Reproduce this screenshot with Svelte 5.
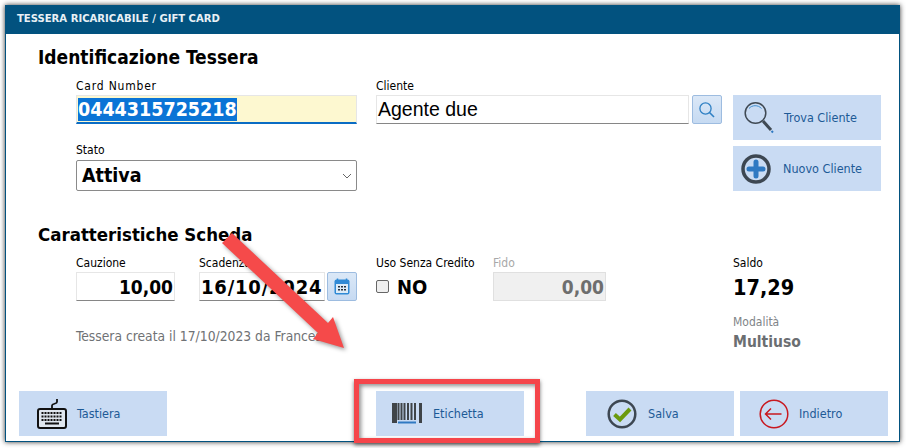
<script lang="ts">
	let saldo = '17,29';
</script>

<div class="page">
	<div class="window">
		<div class="titlebar">TESSERA RICARICABILE / GIFT CARD</div>

		<div class="content">
			<h2 class="first">Identificazione Tessera</h2>
			<div class="row top">
				<div class="col-left">
					<div class="field">
						<span class="lbl wide">Card Number</span>
						<div class="input card"><span class="selected">0444315725218</span></div>
					</div>
					<div class="field stato">
						<span class="lbl">Stato</span>
						<div class="select">
							<span>Attiva</span>
							<svg width="10" height="6" viewBox="0 0 10 6"><path d="M1 1l4 4 4-4" fill="none" stroke="#666" stroke-width="1" /></svg>
						</div>
					</div>
				</div>

				<div class="field col-cliente">
					<span class="lbl">Cliente</span>
					<div class="with-btn">
						<div class="input cliente">Agente due</div>
						<button class="mini" aria-label="Cerca">
							<svg width="18" height="18" viewBox="0 0 18 18" fill="none" stroke="#2f80c4" stroke-width="1.3">
								<circle cx="7.5" cy="7.5" r="5.6" />
								<path d="M11.5 11.5l4.5 4.5" stroke-width="1.6" />
							</svg>
						</button>
					</div>
				</div>

				<div class="col-actions">
					<button class="btn trova">
						<svg width="32" height="34" viewBox="0 0 32 34" fill="none">
							<circle cx="12.5" cy="12" r="10.3" stroke="#3f4953" stroke-width="1.5" />
							<path d="M6 7.5c3-3.6 9-3.9 12.500 0" stroke="#3f8fd0" stroke-width="1" />
							<path d="M20 20l8 9" stroke="#3f4953" stroke-width="3" />
							<path d="M28.500 30l1.500 1.500" stroke="#2f79c2" stroke-width="2" />
						</svg>
						Trova Cliente
					</button>
					<button class="btn nuovo">
						<svg width="30" height="30" viewBox="0 0 30 30" fill="none">
							<circle cx="15" cy="15" r="13" stroke="#3d4752" stroke-width="3.500" />
							<path d="M15 8v14M8 15h14" stroke="#2f79c2" stroke-width="5" stroke-linecap="round" />
						</svg>
						Nuovo Cliente
					</button>
				</div>
			</div>

			<h2 class="second">Caratteristiche Scheda</h2>
			<div class="row mid">
				<div class="field w-cauzione">
					<span class="lbl">Cauzione</span>
					<div class="input num">10,00</div>
				</div>
				<div class="field w-scadenza">
					<span class="lbl">Scadenza</span>
					<div class="with-btn">
						<div class="input date">16/10/2024</div>
						<button class="mini" aria-label="Calendario">
							<svg width="16" height="17" viewBox="0 0 16 17">
								<rect x="0.500" y="1.500" width="15" height="15" rx="2" fill="#2f8ad6" />
								<rect x="2" y="6" width="12" height="9" fill="#dcebf8" />
								<path d="M3.500 0.500v3M12.500 0.500v3" stroke="#2f8ad6" stroke-width="1.500" />
								<path d="M4 8h2v1.500H4zM7 8h2v1.500H7zM10 8h2v1.500h-2zM4 11h2v1.500H4zM7 11h2v1.500H7zM10 11h2v1.500h-2z" fill="#26323d" />
							</svg>
						</button>
					</div>
				</div>
				<div class="field w-uso">
					<span class="lbl">Uso Senza Credito</span>
					<div class="check-line">
						<input type="checkbox" />
						<span>NO</span>
					</div>
				</div>
				<div class="field w-fido">
					<span class="lbl muted">Fido</span>
					<div class="input num disabled">0,00</div>
				</div>
				<div class="field w-saldo">
					<span class="lbl">Saldo</span>
					<div class="saldo">{saldo}</div>
				</div>
			</div>

			<div class="row info">
				<div class="created">Tessera creata il 17/10/2023 da Francesco</div>
				<div class="modalita">
					<span class="lbl muted2">Modalità</span>
					<div class="multi">Multiuso</div>
				</div>
			</div>
		</div>

		<div class="footer">
			<button class="btn tastiera">
				<svg width="30" height="31" viewBox="0 0 30 31" fill="none">
					<path d="M15 11V7.500c0-2 5-1.500 5-3.500V1" stroke="#111" stroke-width="1.800" />
					<rect x="1" y="11" width="28" height="19" rx="2" stroke="#111" stroke-width="2" fill="#dfe6ee" />
					<path d="M4.500 15h21M4.500 18.500h21" stroke="#111" stroke-width="2" stroke-dasharray="2 1" />
					<path d="M4.500 22h21" stroke="#111" stroke-width="2" stroke-dasharray="2 1" />
					<path d="M8 25.500h14" stroke="#111" stroke-width="2" />
				</svg>
				Tastiera
			</button>
			<button class="btn etichetta">
				<svg width="32" height="21" viewBox="0 0 32 21" fill="none">
					<path d="M7.500 0v17M10.500 0v17M13.500 0v17M17 0v17M20.500 0v17M24 0v17" stroke="#3f4448" stroke-width="2" />
					<path d="M1 0h5v20H1z" fill="#3f4448" />
					<path d="M28 0h3v20h-3z" fill="#3f4448" />
					<path d="M7 19.500h18" stroke="#2f79c2" stroke-width="2" />
				</svg>
				Etichetta
			</button>
			<div class="spacer"></div>
			<button class="btn salva">
				<svg width="30" height="30" viewBox="0 0 30 30" fill="none">
					<circle cx="15" cy="15" r="13.300" stroke="#3d4752" stroke-width="2.500" />
					<path d="M7.500 15.500l5.500 5L23 10" stroke="#6b9a0e" stroke-width="4" />
				</svg>
				Salva
			</button>
			<button class="btn indietro">
				<svg width="30" height="30" viewBox="0 0 30 30" fill="none">
					<circle cx="15" cy="15" r="13.800" stroke="#c8181f" stroke-width="1.500" />
					<path d="M6.500 15h16M12 9.500L6.500 15l5.500 5.500" stroke="#c8181f" stroke-width="1.500" />
				</svg>
				Indietro
			</button>
		</div>
	</div>

	<div class="mark-box"></div>
	<svg class="arrow" width="906" height="448" viewBox="0 0 906 448">
		<polygon points="222,243 232,233 328,323 333,317 344,348 313,339 318,333" fill="#f54a4a" />
	</svg>
</div>

<style>
	:global(body) {
		margin: 0;
		background: #fff;
	}

	.page {
		position: relative;
		width: 906px;
		height: 448px;
		overflow: hidden;
		padding: 5px 6px 0 5px;
		box-sizing: border-box;
		font-family: "DejaVu Sans", "Noto Sans", sans-serif;
		font-stretch: condensed;
		color: #000;
	}

	.window {
		height: 437px;
		display: flex;
		flex-direction: column;
		background: #fff;
		border: 1px solid #02527f;
		border-top: 0;
		box-sizing: border-box;
		box-shadow: 0 0 5px rgba(0, 0, 0, 0.8);
	}

	.titlebar {
		height: 29px;
		flex-shrink: 0;
		display: flex;
		align-items: center;
		padding: 0 0 2px 11px;
		box-sizing: border-box;
		background: #02527f;
		color: #e8f0f5;
		font-size: 11.200px;
		font-weight: 700;
	}

	.content {
		flex: 1;
		padding-left: 32px;
	}

	h2 {
		margin: 0;
		font-size: 18.500px;
		font-weight: 700;
		line-height: 22px;
	}

	h2.first {
		margin-top: 12px;
		font-size: 19px;
	}

	h2.second {
		margin-top: 33px;
	}

	.row {
		display: flex;
		padding-left: 38px;
	}

	.row.top {
		margin-top: 11px;
	}

	.row.mid {
		margin-top: 10px;
	}

	.field {
		display: flex;
		flex-direction: column;
	}

	.lbl {
		font-size: 12px;
		line-height: 14px;
		margin-bottom: 2px;
	}

	.lbl.wide {
		letter-spacing: 0.8px;
	}

	.lbl.muted {
		color: #a8a8a8;
	}

	.lbl.muted2 {
		color: #808488;
	}

	.col-left {
		width: 281px;
		margin-right: 19px;
	}

	.stato {
		margin-top: 19px;
	}

	.stato .lbl {
		margin-bottom: 3px;
	}

	.input {
		height: 29px;
		box-sizing: border-box;
		display: flex;
		align-items: center;
		background: #fff;
		border: 1px solid #e6e6e6;
		border-bottom: 1px solid #868686;
		padding: 0 2px;
	}

	.card {
		background: #fdf8d0;
		border-bottom: 2px solid #0a6cc4;
		font-size: 19.500px;
		font-weight: 700;
		padding-left: 1px;
	}

	.selected {
		background: #0a74d6;
		color: #fff;
		line-height: 23px;
	}

	.select {
		height: 31px;
		box-sizing: border-box;
		display: flex;
		align-items: center;
		justify-content: space-between;
		border: 1px solid #8a8a8a;
		border-radius: 2px;
		padding: 0 4px 0 5px;
		font-size: 19.500px;
		font-weight: 700;
	}

	.col-cliente {
		width: 346px;
		margin-right: 11px;
	}

	.with-btn {
		display: flex;
		gap: 3px;
	}

	.cliente {
		flex: 1;
		padding-left: 1px;
		font-family: "Liberation Sans", Arial, sans-serif;
		font-stretch: normal;
		font-size: 19.500px;
	}

	.mini {
		width: 30px;
		height: 29px;
		flex-shrink: 0;
		padding: 0;
		display: flex;
		align-items: center;
		justify-content: center;
		border: 1px solid #9dbce0;
		border-radius: 2px;
		background: linear-gradient(#dbe8f7, #c6daf2);
	}

	.col-actions {
		width: 148px;
		margin-top: 16px;
		display: flex;
		flex-direction: column;
		gap: 6px;
	}

	.btn {
		width: 148px;
		height: 45px;
		flex-shrink: 0;
		display: flex;
		align-items: center;
		padding: 0;
		border: 0;
		background: #c9dbf3;
		color: #1d5a96;
		font-family: inherit;
		font-stretch: inherit;
		font-size: 12.500px;
	}

	.trova { padding-left: 10px; gap: 9px; }
	.nuovo { padding-left: 8px; gap: 12px; }
	.tastiera { padding-left: 18px; gap: 10px; }
	.etichetta { padding-left: 15px; gap: 10px; }
	.salva { padding-left: 21px; gap: 11px; }
	.indietro { padding-left: 19px; gap: 10px; }

	.w-cauzione { width: 99px; margin-right: 24px; }
	.w-scadenza { width: 158px; margin-right: 19px; }
	.w-uso { width: 117px; }
	.w-fido { width: 113px; margin-right: 127px; }

	.w-scadenza .with-btn {
		gap: 2px;
	}

	.num {
		justify-content: flex-end;
		padding-right: 1px;
		font-size: 19px;
		font-weight: 700;
	}

	.date {
		flex: 1;
		padding-left: 1px;
		font-size: 20px;
		font-weight: 700;
		letter-spacing: 0.8px;
	}

	.disabled {
		background: #f0f0f0;
		border: 1px solid #e0e0e0;
		color: #6e6e6e;
	}

	.check-line {
		height: 29px;
		display: flex;
		align-items: center;
		gap: 8px;
		font-size: 20px;
		font-weight: 700;
	}

	.check-line input {
		appearance: none;
		width: 13px;
		height: 13px;
		margin: 0;
		background: #efefef;
		border: 1px solid #666;
		border-radius: 2px;
	}

	.saldo {
		height: 30px;
		display: flex;
		align-items: center;
		font-size: 21.500px;
		font-weight: 700;
	}

	.info {
		justify-content: space-between;
		padding-right: 0;
	}

	.created {
		margin-top: 26px;
		font-size: 13.750px;
		line-height: 17px;
		color: #6f7275;
	}

	.modalita {
		width: 148px;
		margin-right: 18px;
		margin-top: 9px;
	}

	.multi {
		margin-top: 2px;
		font-size: 15.500px;
		line-height: 20px;
		font-weight: 700;
		color: #6b6e71;
	}

	.footer {
		display: flex;
		gap: 6px;
		padding: 0 11px 5px 13px;
	}

	.etichetta {
		margin-left: 203px;
	}

	.spacer {
		width: 56px;
	}

	.mark-box {
		position: absolute;
		left: 354px;
		top: 379px;
		width: 186px;
		height: 64px;
		box-sizing: border-box;
		border: 5px solid #f5454a;
		box-shadow: 0 2px 4px rgba(0, 0, 0, 0.55), inset 2px 2px 4px rgba(0, 0, 0, 0.45);
	}

	.arrow {
		position: absolute;
		left: 0;
		top: 0;
		filter: drop-shadow(2px 2px 2px rgba(0, 0, 0, 0.4));
		pointer-events: none;
	}
</style>
